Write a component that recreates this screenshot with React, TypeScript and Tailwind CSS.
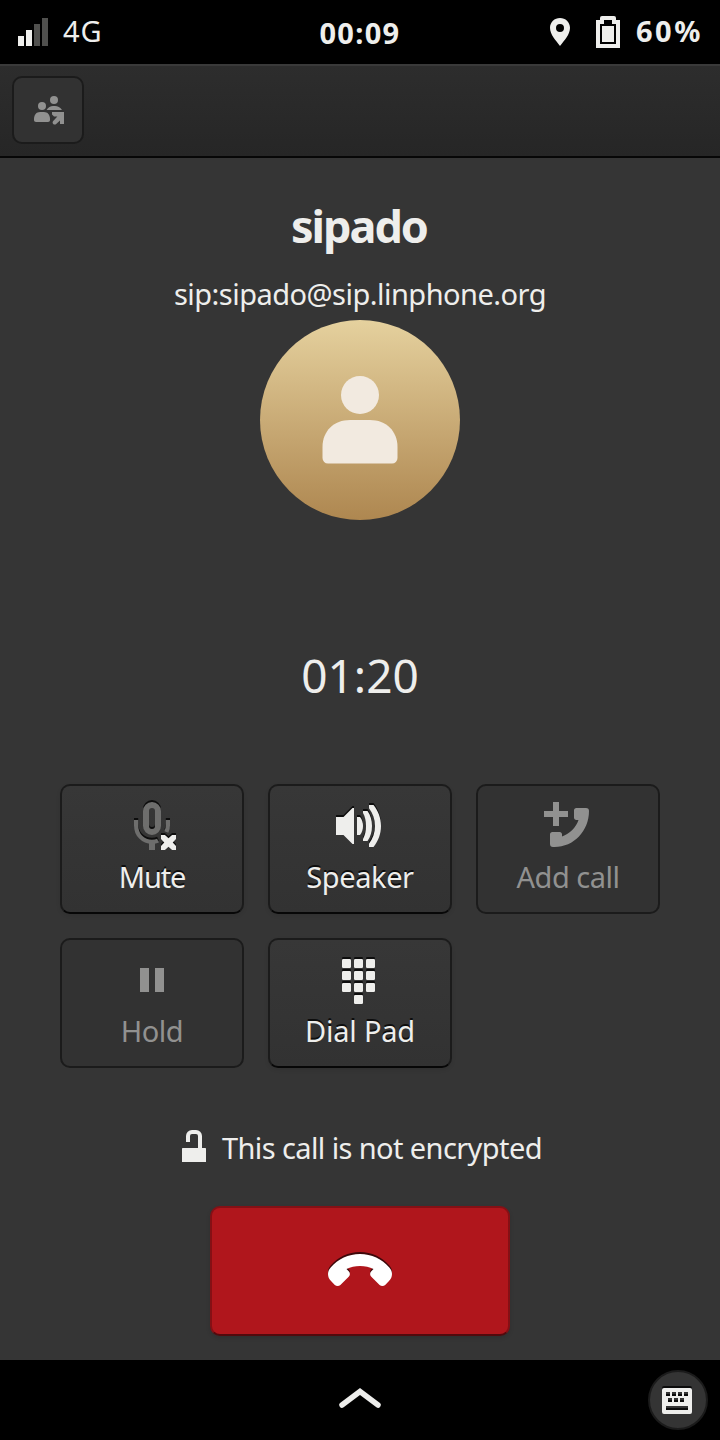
import type { ReactNode } from 'react';
import { clsx } from 'clsx';

function SignalIcon() {
  return (
    <svg width="30" height="28" viewBox="0 0 30 28" fill="#eeeeec">
      <path d="M0 18h6v10H0zM8 12h6v16H8z" />
      <path fill="#50504e" d="M16 6h6v22h-6zM24 0h6v28h-6z" />
    </svg>
  );
}

function LocationIcon() {
  return (
    <svg width="20" height="28" viewBox="0 0 20 28" fill="#eeeeec">
      <path
        fillRule="evenodd"
        d="M10 0C4.500 0 0 4.200 0 9.800 0 17 6 22.500 10 28c4-5.500 10-11 10-18.200C20 4.200 15.500 0 10 0zm0 6a4 4 0 1 1 0 8 4 4 0 0 1 0-8z"
      />
    </svg>
  );
}

function BatteryIcon() {
  return (
    <svg width="24" height="32" viewBox="0 0 24 32" fill="#eeeeec">
      <path
        fillRule="evenodd"
        d="M6 0h12a2 2 0 0 1 2 2v2h4v28H0V4h4V2a2 2 0 0 1 2-2zM8 4v4H4v20h16V8h-4V4z"
      />
      <path d="M6 10h12v16H6z" />
    </svg>
  );
}

function MergeCallsIcon() {
  return (
    <svg width="32" height="32" viewBox="0 0 16 16" fill="#919190">
      <circle cx="5" cy="6" r="2" />
      <circle cx="11" cy="3" r="2" />
      <path d="M1 12.500C1 10.400 2.200 9 4 9h2c1.800 0 3 1.400 3 3.500V13c0 .6-.4 1-1 1H2c-.6 0-1-.4-1-1z" />
      <path d="M7.300 8C8 6.600 9.300 6 10.500 6h1c1.300 0 2.700.6 3.500 2z" />
      <path d="M10 9h6v6h-2v-1.800L12.100 15c-.5.400-1 .4-1.500 0-.4-.5-.4-1 0-1.500L12.700 11.300H11L10 10.300z" />
    </svg>
  );
}

function MuteIcon() {
  return (
    <svg width="48" height="48" viewBox="0 0 16 16">
      <g fill="none" stroke="#6e6e6d">
        <rect x="6" y="1" width="4" height="9" rx="2" strokeWidth="2" />
        <path d="M2.700 6v1.800C2.700 10.900 5 13.300 8 13.300c.8 0 1.400-.1 2-.4M13.300 6v1.800c0 .8-.2 1.500-.5 2.200" strokeWidth="1.400" />
        <path d="M8 13v3" strokeWidth="2" />
      </g>
      <path
        fill="#eeeeec"
        d="M11 11h1.300l1.200 1.100 1.200-1.100H16v1.300l-1.100 1.200 1.100 1.200V16h-1.300l-1.200-1.100L12.300 16H11v-1.300l1.100-1.200-1.100-1.200z"
      />
    </svg>
  );
}

function SpeakerIcon() {
  return (
    <svg width="48" height="48" viewBox="0 0 16 16" fill="#eeeeec">
      <path d="M0 5h2.500L5.500 2H6v12h-.5l-3-3H0z" />
      <path d="M7 5h1c.7.900 1 1.900 1 3s-.3 2.100-1 3H7z" />
      <path d="M9 3h1.500c1 1.400 1.500 3.100 1.500 5s-.5 3.600-1.500 5H9v-.7c.7-1.200 1-2.700 1-4.300s-.3-3.100-1-4.300z" />
      <path d="M11 1h1.500C14.100 3 15 5.400 15 8s-.9 5-2.500 7H11v-1.100c1.300-1.700 2-3.700 2-5.900s-.7-4.200-2-5.900z" />
    </svg>
  );
}

function AddCallIcon() {
  return (
    <svg width="48" height="48" viewBox="0 0 16 16" fill="#919190">
      <path d="M3 0h2v3h3v2H5v3H3V5H0V3h3z" />
      <path d="M10.800 2H14a1 1 0 0 1 1 1C15 9.600 10 15 3.500 15H3a1 1 0 0 1-1-1v-3.200c0-.5.300-.8.800-.8h2.400c.5 0 .8.300.8.800v.7c2.600-.9 4.700-3 5.500-5.500h-.7c-.5 0-.8-.3-.8-.8V2.800c0-.5.300-.8.800-.8z" />
    </svg>
  );
}

function HoldIcon() {
  return (
    <svg width="48" height="48" viewBox="0 0 16 16" fill="#919190">
      <path d="M4 4h3v8H4zM9 4h3v8H9z" />
    </svg>
  );
}

const KEYS = [
  [2, 1], [6, 1], [10, 1],
  [2, 5], [6, 5], [10, 5],
  [2, 9], [6, 9], [10, 9],
  [6, 13],
];

function DialPadIcon() {
  return (
    <svg width="48" height="48" viewBox="0 0 16 16" fill="#eeeeec">
      {KEYS.map(([x, y]) => (
        <rect key={`${x}-${y}`} x={x} y={y} width="3" height="3" rx="0.400" />
      ))}
    </svg>
  );
}

function UnlockedIcon() {
  return (
    <svg width="32" height="32" viewBox="0 0 16 16">
      <path d="M5 6V3a2 2 0 0 1 2-2h2a2 2 0 0 1 2 2v7" fill="none" stroke="#eeeeec" strokeWidth="2" />
      <path d="M2.500 9h11c.3 0 .5.200.5.500V16H2V9.500c0-.3.200-.5.500-.5z" fill="#eeeeec" />
    </svg>
  );
}

function HangUpIcon() {
  return (
    <svg
      className="overflow-visible drop-shadow-[0_-2px_0_rgba(0,0,0,0.65)]"
      width="64"
      height="32"
      viewBox="0 0 64 32"
      fill="#fff"
    >
      <path d="M0 20c0-2.500 1-4.800 2.700-6.600C10 5 20.500 0 32 0s22 5 29.300 13.400C63 15.200 64 17.500 64 20c0 3-1.200 5.300-3 7l-3.800 3.900c-1.500 1.500-4.100 1.500-5.600 0l-8.300-8.200c-1.600-1.600-1.600-4 0-5.500L45.500 15C41.500 13 37 12 32 12s-9.500 1-13.500 3l2.200 2.200c1.600 1.500 1.600 3.900 0 5.500l-8.300 8.200c-1.500 1.500-4.100 1.500-5.600 0L3 27c-1.800-1.700-3-4-3-7z" />
    </svg>
  );
}

function KeyboardIcon() {
  return (
    <svg
      className="overflow-visible drop-shadow-[0_-2px_0_#0b0b0b]"
      width="30"
      height="26"
      viewBox="0 0 30 26"
      fill="#eeeeec"
    >
      <path
        fillRule="evenodd"
        d="M2 0h26a2 2 0 0 1 2 2v22a2 2 0 0 1-2 2H2a2 2 0 0 1-2-2V2a2 2 0 0 1 2-2zM4 4v4h4V4zM10 4v4h4V4zM16 4v4h4V4zM22 4v4h4V4zM6 10v4h4v-4zM12 10v4h4v-4zM18 10v4h4v-4zM4 18v4h22v-4z"
      />
    </svg>
  );
}

type CallButtonProps = {
  icon: ReactNode;
  label: string;
  tracking: string;
  disabled?: boolean;
};

function CallButton({ icon, label, tracking, disabled }: CallButtonProps) {
  return (
    <button
      disabled={disabled}
      className={clsx(
        'flex h-[130px] w-[184px] flex-col items-center rounded-[10px] border-2 border-[#1b1b1b] pt-4',
        disabled
          ? 'bg-[#323232] text-[#919190]'
          : 'border-b-[#070707] bg-linear-to-b from-[#373737] to-[#323232] text-[#eeeeec] shadow-[0_2px_4px_rgba(0,0,0,0.08)] [text-shadow:0_-2px_0_#0d0d0d] [&_svg]:overflow-visible [&_svg]:drop-shadow-[0_-2px_0_rgba(0,0,0,0.75)]',
      )}
    >
      {icon}
      <span className={clsx('mt-[11px] text-[29px] leading-8 whitespace-nowrap', tracking)}>{label}</span>
    </button>
  );
}

export default function App() {
  return (
    <div className="flex h-[1440px] w-[720px] flex-col overflow-hidden bg-[#353535] font-['Noto_Sans','Open_Sans',sans-serif] text-[#eeeeec]">
      <div className="grid h-16 shrink-0 grid-cols-3 items-center bg-black px-[18px]">
        <div className="flex items-center gap-[15px]">
          <SignalIcon />
          <span className="pb-0.5 text-[29px] leading-8 tracking-[0.800px]">4G</span>
        </div>
        <span className="pt-0.5 text-center text-[29px] leading-8 font-bold tracking-[1.300px]">00:09</span>
        <div className="flex items-center justify-end">
          <LocationIcon />
          <span className="ml-[26px]">
            <BatteryIcon />
          </span>
          <span className="ml-4 w-[66px] pb-0.5 text-[29px] leading-8 font-bold tracking-[2.500px] whitespace-nowrap">
            60%
          </span>
        </div>
      </div>

      <header className="flex h-[94px] shrink-0 items-start border-t-2 border-b-2 border-t-[#3a3a3a] border-b-[#070707] bg-linear-to-b from-[#2d2d2d] to-[#262626] px-3 pt-[10px]">
        <button
          disabled
          className="flex h-[68px] w-[72px] items-center justify-center rounded-[10px] border-2 border-[#1b1b1b] bg-[#323232]"
        >
          <MergeCallsIcon />
        </button>
      </header>

      <main className="flex flex-1 flex-col items-center pt-[38px]">
        <h1 className="pr-0.5 text-[45px] leading-[60px] font-bold tracking-[-2px]">sipado</h1>
        <p className="mt-[18px] text-[29px] leading-10 tracking-[-0.520px]">sip:sipado@sip.linphone.org</p>

        <div className="mt-1.5 flex size-[200px] items-center justify-center rounded-full bg-linear-to-b from-[#e5d19e] to-[#ae8750]">
          <svg width="76" height="88" viewBox="0 0 76 88" fill="#f2eae0">
            <circle cx="38" cy="19" r="19" />
            <path d="M0.500 71C0.500 55 12 44 28 44h20c16 0 27.500 11 27.500 27v11a5.500 5.500 0 0 1-5.500 5.500H6A5.500 5.500 0 0 1 .5 82z" />
          </svg>
        </div>

        <p className="mt-[125px] text-[46px] leading-[60px]">01:20</p>

        <div className="mt-[79px] grid grid-cols-3 gap-6">
          <CallButton icon={<MuteIcon />} label="Mute" tracking="tracking-[-1.200px]" />
          <CallButton icon={<SpeakerIcon />} label="Speaker" tracking="tracking-[-0.400px]" />
          <CallButton icon={<AddCallIcon />} label="Add call" tracking="tracking-[-0.500px]" disabled />
          <CallButton icon={<HoldIcon />} label="Hold" tracking="tracking-[-0.500px]" disabled />
          <CallButton icon={<DialPadIcon />} label="Dial Pad" tracking="tracking-[-0.200px]" />
        </div>

        <div className="mt-[62px] flex h-8 w-[364px] items-center gap-3">
          <UnlockedIcon />
          <span className="pt-[3px] text-[29px] leading-8 tracking-[-0.600px] whitespace-nowrap">
            This call is not encrypted
          </span>
        </div>

        <button className="mt-11 flex h-[130px] w-[300px] items-center justify-center rounded-[10px] border-2 border-[#851015] border-b-[#520a0d] bg-[#b0161c] pb-0.5 shadow-[0_2px_4px_rgba(0,0,0,0.12)]">
          <HangUpIcon />
        </button>
      </main>

      <footer className="grid h-20 shrink-0 grid-cols-3 items-center bg-black px-3">
        <span />
        <svg className="mb-1 justify-self-center" width="42" height="22" viewBox="0 0 42 22" fill="none">
          <path d="M3 18 21 4.500l18 13.500" stroke="#eeeeec" strokeWidth="5.500" strokeLinecap="round" />
        </svg>
        <button className="flex size-[60px] items-center justify-center justify-self-end rounded-full border-2 border-[#1b1b1b] bg-[#343434] pt-0.5 pr-0.5">
          <KeyboardIcon />
        </button>
      </footer>
    </div>
  );
}
